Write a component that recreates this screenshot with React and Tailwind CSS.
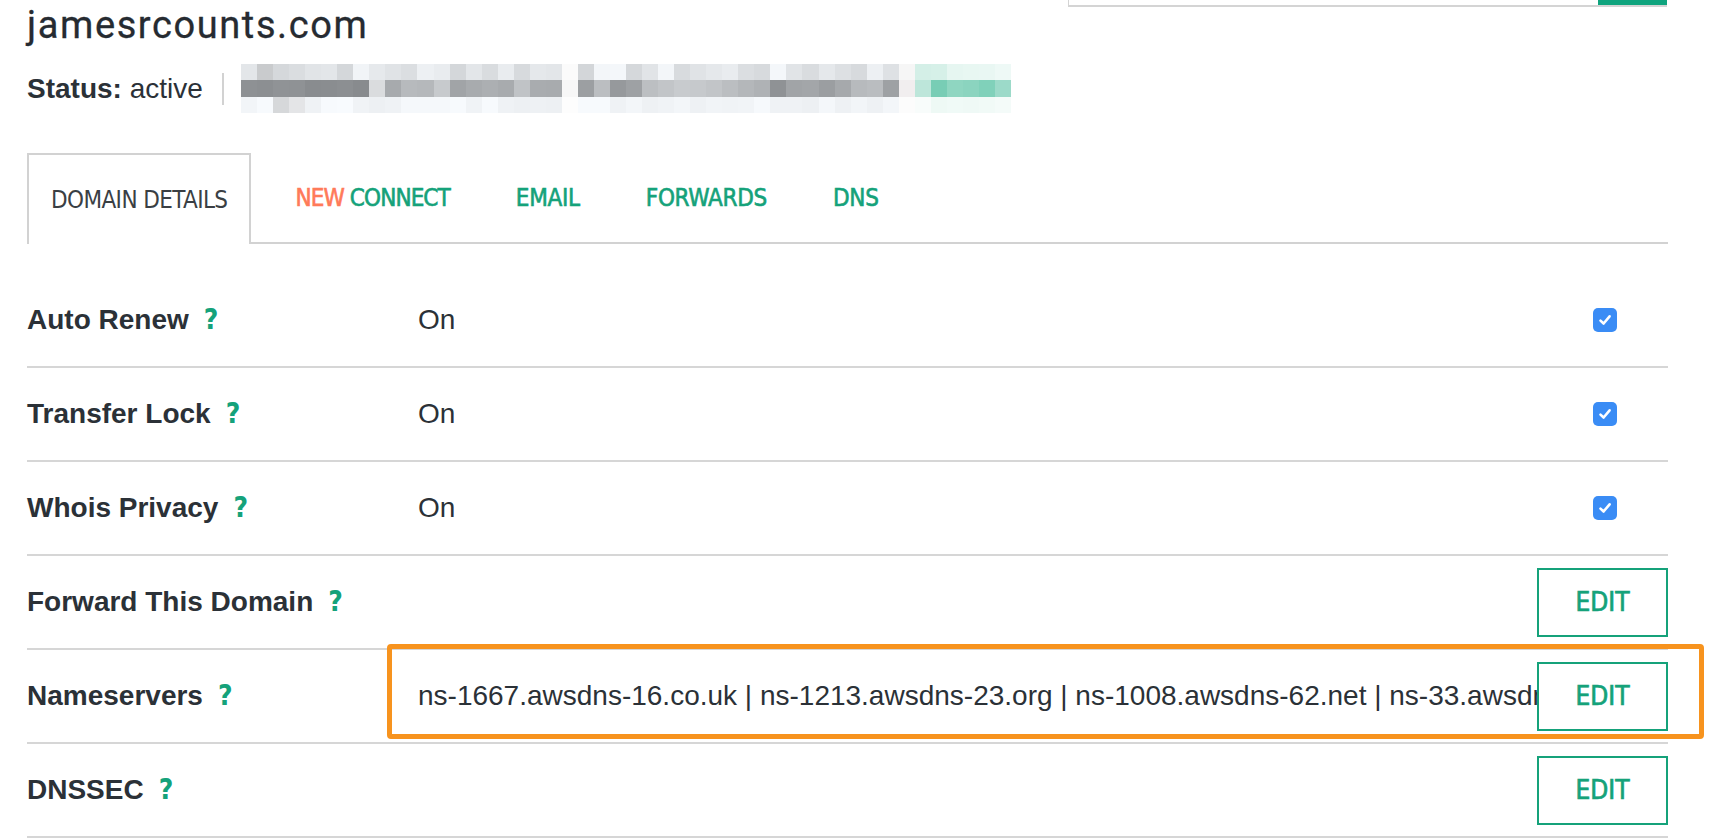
import React from 'react';

const rows = [
  { label: 'Auto Renew', value: 'On', control: 'check' },
  { label: 'Transfer Lock', value: 'On', control: 'check' },
  { label: 'Whois Privacy', value: 'On', control: 'check' },
  { label: 'Forward This Domain', value: '', control: 'edit' },
  {
    label: 'Nameservers',
    value: 'ns-1667.awsdns-16.co.uk | ns-1213.awsdns-23.org | ns-1008.awsdns-62.net | ns-33.awsdns-04.com',
    control: 'edit',
    highlight: true,
  },
  { label: 'DNSSEC', value: '', control: 'edit' },
];

// blurred-out account info next to the status
const mosaicColors = () => {
  let seed = 7;
  const rand = () => {
    seed = (seed * 9301 + 49297) % 233280;
    return seed / 233280;
  };
  const grey = (l) => {
    const v = Math.round(l);
    return `rgb(${v - 3},${v},${v + 3})`;
  };
  const out = [];
  for (let r = 0; r < 3; r++) {
    const row = [];
    for (let c = 0; c < 48; c++) {
      let l;
      if (r === 0) l = 212 + rand() * 36;
      else if (r === 1) l = c < 8 ? 138 + rand() * 12 : 145 + rand() * 60;
      else l = 240 + rand() * 12;
      row.push(grey(l));
    }
    out.push(row);
  }
  out[0][1] = '#c9cbcd';
  out[2][2] = '#d6d8da';
  out[2][3] = '#e4e5e7';
  out[1][8] = '#dadcde';
  out[0][20] = '#fbfbfb';
  out[1][20] = '#f7f7f7';
  out[2][20] = '#fdfdfd';
  out[0][41] = '#f6f6f6';
  out[1][41] = '#f1eeef';
  out[2][41] = '#fcfcfc';
  const greens = [
    ['#d4efe7', '#d6f0e8', '#e6f6f1', '#e8f7f2', '#e9f7f3', '#eef9f6'],
    ['#bde6da', '#78cdb5', '#8fd6c1', '#8bd4bf', '#80d1ba', '#9cdac9'],
    ['#f8fcfb', '#eef9f5', '#f0faf7', '#eff9f6', '#f1faf7', '#f4fbf9'],
  ];
  for (let r = 0; r < 3; r++) for (let i = 0; i < 6; i++) out[r][42 + i] = greens[r][i];
  return out;
};

const Mosaic = () => {
  const cells = mosaicColors();
  return (
    <svg width="770" height="49" viewBox="0 0 48 3" preserveAspectRatio="none" shapeRendering="crispEdges">
      {cells.map((row, r) =>
        row.map((fill, c) => <rect key={`${r}-${c}`} x={c} y={r} width="1.02" height="1.02" fill={fill} />)
      )}
    </svg>
  );
};

const Checkbox = () => (
  <div className="ml-[4px] w-[24px] h-[24px] rounded-[5px] bg-[#3a8cf5] flex items-center justify-center">
    <svg width="16" height="16" viewBox="0 0 16 16" fill="none">
      <path d="M3.5 8.6 L6.6 11.5 L12.6 4.3" stroke="white" strokeWidth="2.6" strokeLinecap="round" strokeLinejoin="round" />
    </svg>
  </div>
);

const EditButton = () => (
  <button className="w-[131px] h-[69px] border-2 border-[#15a27a] bg-white flex items-center justify-center font-['Liberation_Sans_Narrow','DejaVu_Sans_Condensed',Roboto,sans-serif] text-[26px] leading-none text-[#15a27a] [-webkit-text-stroke:0.7px_#15a27a]">
    EDIT
  </button>
);

const DetailRow = ({ row }) => (
  <div className="relative flex items-center h-[94px] border-b-2 border-[#d6d6d6]">
    <div className="w-[391px] shrink-0 flex items-center">
      <span className="text-[28px] leading-[34px] font-bold text-[#2b3137]">{row.label}</span>
      <span className="ml-[15px] font-['Liberation_Sans_Narrow','DejaVu_Sans_Condensed',Roboto,sans-serif] font-bold text-[28px] leading-[34px] text-[#15a27a]">
        ?
      </span>
    </div>
    <div className="flex-1 min-w-0 overflow-hidden whitespace-nowrap text-[28px] leading-[36px] text-[#2b3137]">
      {row.value}
    </div>
    <div className="w-[131px] shrink-0 flex justify-center">
      {row.control === 'check' ? <Checkbox /> : <EditButton />}
    </div>
    {row.highlight && (
      <div className="absolute left-[360px] top-[-6px] w-[1317px] h-[95px] border-[5px] border-[#f7931e] rounded-[4px] pointer-events-none" />
    )}
  </div>
);

const tabs = ['NEW CONNECT', 'EMAIL', 'FORWARDS', 'DNS'];

export default function App() {
  return (
    <div className="min-h-screen bg-white overflow-hidden font-['Liberation_Sans',Arial,sans-serif]">
      <div className="ml-[27px] w-[1641px]">
        {/* Header */}
        <div className="flex items-start justify-between">
          <h1 className="font-['Roboto',sans-serif] text-[38px] leading-[50px] tracking-[1.6px] text-[#262b31] [-webkit-text-stroke:0.3px_#262b31]">
            jamesrcounts.com
          </h1>
          <div className="mr-[1px] w-[599px] h-[7px] border-l border-b-2 border-[#d4d4d4] flex justify-end">
            <div className="w-[69px] h-[5px] bg-[#0fa47e]" />
          </div>
        </div>

        {/* Status */}
        <div className="mt-[14px] h-[49px] flex items-center">
          <span className="text-[28px] leading-[34px] text-[#2b3137]">
            <span className="font-bold">Status:</span> active
          </span>
          <div className="ml-[19px] w-[2px] h-[32px] bg-[#d2d2d2]" />
          <div className="ml-[17px]">
            <Mosaic />
          </div>
        </div>

        {/* Tabs */}
        <div className="mt-[40px] flex items-end gap-[22px] border-b-2 border-[#d2d2d2] h-[91px] font-['Liberation_Sans_Narrow','DejaVu_Sans_Condensed',Roboto,sans-serif]">
          <div className="-mb-[2px] h-[91px] px-[22px] flex items-center border-2 border-b-0 border-[#d2d2d2] bg-white text-[24px] tracking-[-0.6px] text-[#3a3f44]">
            DOMAIN DETAILS
          </div>
          {tabs.map((t) => (
            <div
              key={t}
              className="h-[89px] px-[22px] flex items-center text-[24px] tracking-[-0.3px] text-[#15a27a] [-webkit-text-stroke:0.6px_#15a27a]"
            >
              {t === 'NEW CONNECT' ? (
                <span className="tracking-[-0.9px]">
                  <span className="text-[#ff7a59] [-webkit-text-stroke:0.6px_#ff7a59]">NEW</span> CONNECT
                </span>
              ) : (
                t
              )}
            </div>
          ))}
        </div>

        {/* Details */}
        <div className="mt-[30px]">
          {rows.map((row) => (
            <DetailRow key={row.label} row={row} />
          ))}
        </div>
      </div>
    </div>
  );
}
